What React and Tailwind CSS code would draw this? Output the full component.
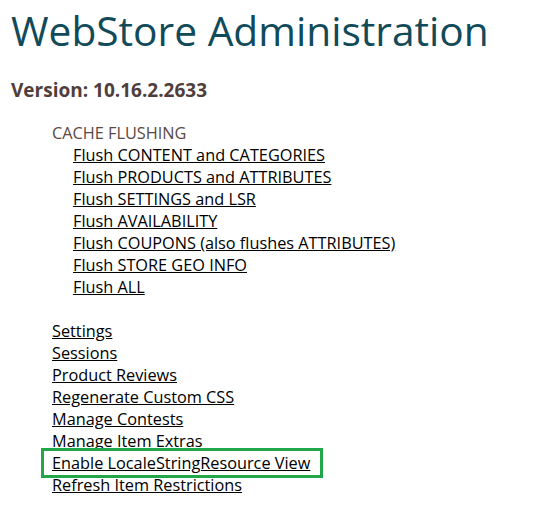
import React from "react";

const flush = [
  "Flush CONTENT and CATEGORIES",
  "Flush PRODUCTS and ATTRIBUTES",
  "Flush SETTINGS and LSR",
  "Flush AVAILABILITY",
  "Flush COUPONS (also flushes ATTRIBUTES)",
  "Flush STORE GEO INFO",
  "Flush ALL",
];

const links = [
  "Settings",
  "Sessions",
  "Product Reviews",
  "Regenerate Custom CSS",
  "Manage Contests",
  "Manage Item Extras",
  "Enable LocaleStringResource View",
  "Refresh Item Restrictions",
];

export default function App() {
  return (
    <div
      className="w-[548px] h-[509px] bg-white overflow-hidden pl-[11px]"
      style={{ fontFamily: '"Open Sans", sans-serif' }}
    >
      <h1 className="mt-[2px] text-[40.7px] leading-[56px] text-[#114a59] font-normal">
        WebStore Administration
      </h1>
      <div className="mt-[20px] text-[19px] leading-[24px] font-bold text-[#4f3e3b]">
        Version: 10.16.2.2633
      </div>
      <div className="mt-[20px] pl-[41px] text-[16.3px] leading-[22px]">
        <div className="text-[#5a4842]">CACHE FLUSHING</div>
        <div className="pl-[21px] flex flex-col">
          {flush.map((t) => (
            <a key={t} href="#" className="text-black underline self-start">
              {t}
            </a>
          ))}
        </div>
        <div className="mt-[22px] flex flex-col">
          {links.map((t) => (
            <div key={t} className="relative self-start">
              <a href="#" className="text-black underline">
                {t}
              </a>
              {t === "Enable LocaleStringResource View" && (
                <div className="absolute left-[-11px] top-[-4px] w-[282px] h-[30px] border-[3px] border-[#22a64a]" />
              )}
            </div>
          ))}
        </div>
      </div>
    </div>
  );
}
